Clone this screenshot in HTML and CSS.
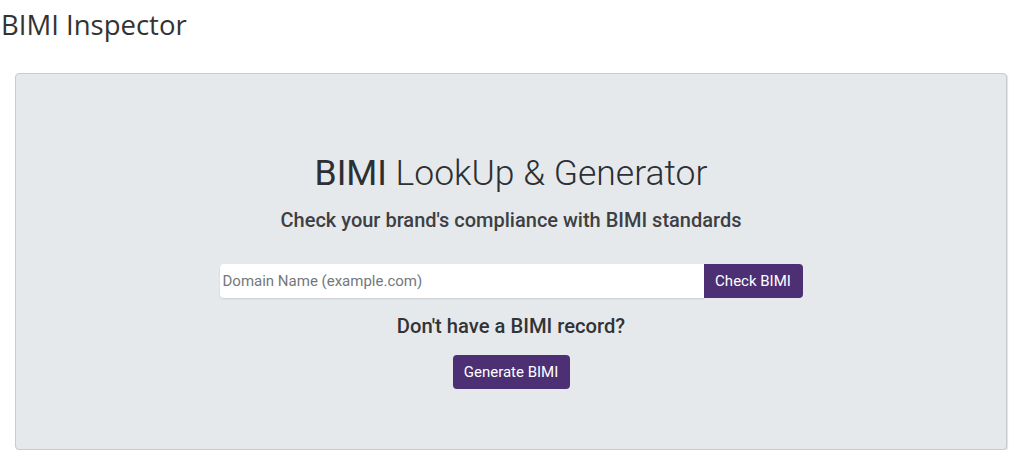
FILE: index.html
```html
<!DOCTYPE html>
<html lang="en">
<head>
<meta charset="utf-8">
<title>BIMI Inspector</title>
<link rel="stylesheet" href="styles.css">
</head>
<body>
<h1 class="page-title">BIMI Inspector</h1>
<section class="jumbo">
  <h2 class="jumbo-title"><span class="strong">BIMI</span> LookUp &amp; Generator</h2>
  <p class="jumbo-sub">Check your brand's compliance with BIMI standards</p>
  <form class="lookup">
    <input class="lookup-input" type="text" placeholder="Domain Name (example.com)">
    <button class="btn btn-group-end" type="button">Check BIMI</button>
  </form>
  <p class="jumbo-q">Don't have a BIMI record?</p>
  <button class="btn btn-solo" type="button">Generate BIMI</button>
</section>
</body>
</html>
```
FILE: styles.css
```css
html, body {
  margin: 0;
  padding: 0;
  background: #ffffff;
}
body {
  font-family: "Open Sans", "Liberation Sans", sans-serif;
  color: #333333;
}
.page-title {
  margin: 0;
  padding: 6px 0 0 1px;
  height: 73px;
  box-sizing: border-box;
  font-family: "Open Sans", sans-serif;
  font-size: 27.5px;
  font-weight: 400;
  line-height: 38px;
  color: #333333;
}
.jumbo {
  margin: 0 0 0 15px;
  width: 992px;
  height: 377px;
  box-sizing: border-box;
  background: #e6e9ec;
  border: 1px solid #c9cbcd;
  border-radius: 4px;
  box-shadow: 1px 1px 1px rgba(0,0,0,0.12);
  display: flex;
  flex-direction: column;
  align-items: center;
  padding-top: 77px;
  font-family: Roboto, "Liberation Sans", sans-serif;
}
.jumbo-title {
  margin: 0;
  font-size: 35.5px;
  font-weight: 300;
  line-height: 44px;
  color: #2c2f33;
}
.jumbo-title .strong {
  font-weight: 400;
}
.jumbo-sub {
  margin: 12px 0 0 0;
  font-size: 20px;
  font-weight: 500;
  line-height: 26px;
  color: #3d4043;
}
.lookup {
  margin: 31px 0 0 0;
  display: flex;
  width: 583px;
  height: 34px;
}
.lookup-input {
  flex: 1;
  min-width: 0;
  height: 34px;
  box-sizing: border-box;
  border: none;
  border-radius: 4px 0 0 4px;
  padding: 0 3px;
  font-family: Roboto, "Liberation Sans", sans-serif;
  font-size: 15px;
  background: #ffffff;
  box-shadow: 0 1px 2px rgba(0,0,0,0.12);
  outline: none;
}
.lookup-input::placeholder {
  color: #74787c;
}
.btn {
  background: #4d2f73;
  color: #ffffff;
  border: none;
  font-family: Roboto, "Liberation Sans", sans-serif;
  font-size: 15px;
  font-weight: 400;
  height: 34px;
  box-sizing: border-box;
  cursor: pointer;
}
.btn-group-end {
  width: 99px;
  border-radius: 0 4px 4px 0;
  padding: 0;
}
.jumbo-q {
  margin: 15px 0 0 0;
  font-size: 20.2px;
  font-weight: 500;
  line-height: 26px;
  color: #313437;
}
.btn-solo {
  margin-top: 16px;
  width: 117px;
  border-radius: 4px;
  padding: 0;
}
```
